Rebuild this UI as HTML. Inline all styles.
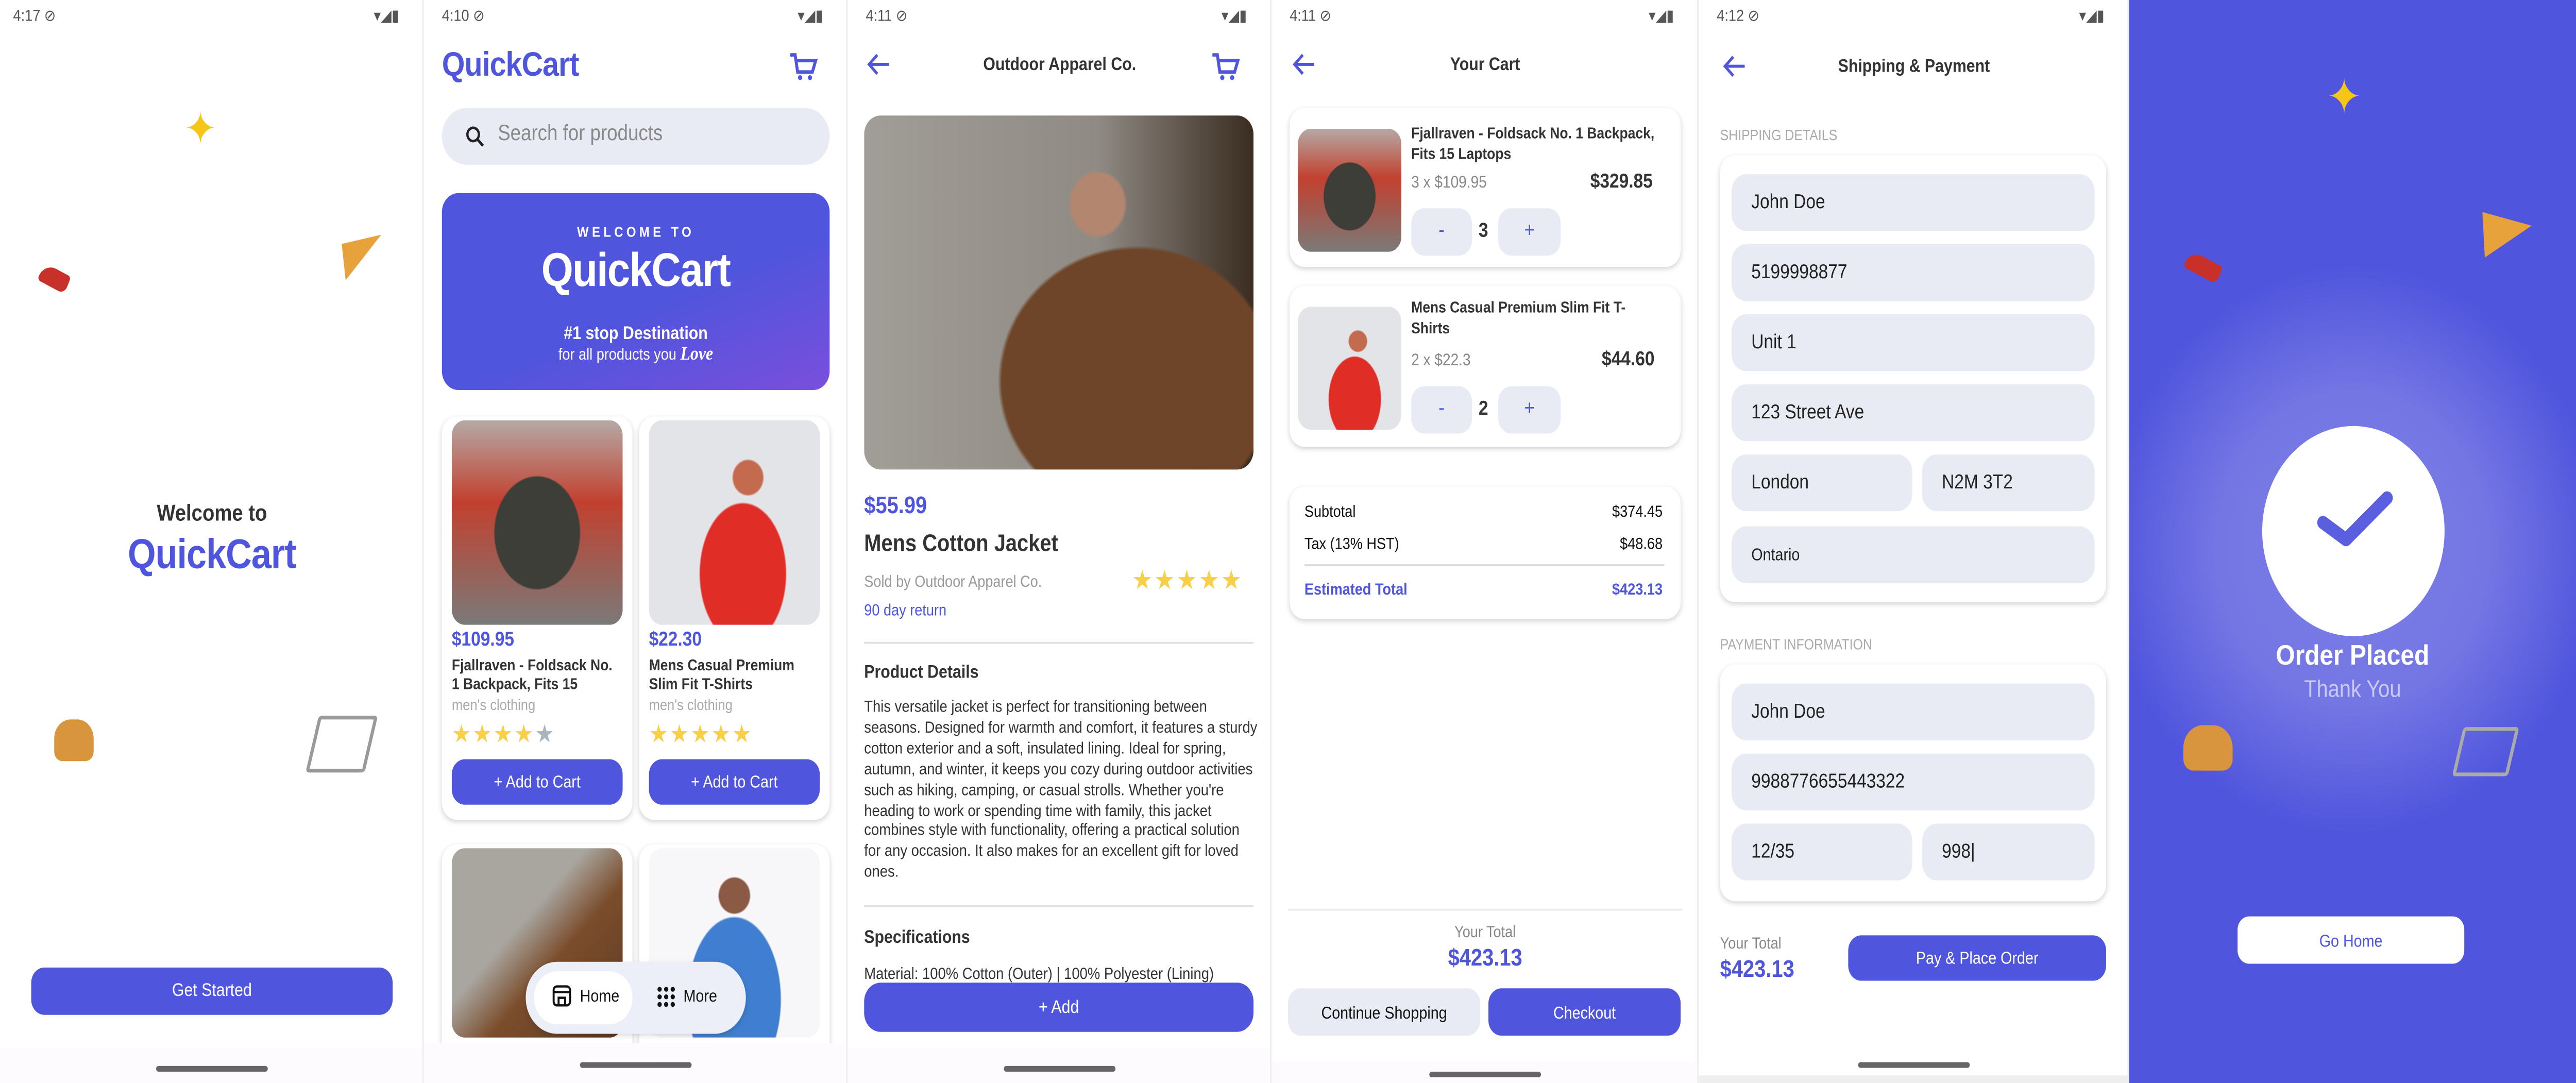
<!DOCTYPE html>
<html><head><meta charset="utf-8">
<style>
*{margin:0;padding:0;box-sizing:border-box}
html,body{width:100%;height:100%;overflow:hidden;background:#fff}
svg.root{display:block;width:100vw;height:100vh}
#w{position:relative;width:1568px;height:572px;font-family:"Liberation Sans",sans-serif;color:#333;background:#fff}
.a{position:absolute}
.scr{position:absolute;top:0;height:572px;overflow:hidden;background:#fff;border-right:1px solid #eee}
.st{position:absolute;top:3px;font-size:8.5px;color:#555}
.bar{position:absolute;left:0;right:0;height:18px;background:#fdfbfe}
.ind{position:absolute;height:2.5px;width:68px;background:#666;border-radius:2px}
.btn{position:absolute;background:#4f55dd;color:#fff;border-radius:8px;display:flex;align-items:center;justify-content:center;font-size:9.5px}
.b{font-weight:bold}
.card{position:absolute;background:#fff;border-radius:9px;box-shadow:0 1px 3px rgba(0,0,0,.18)}
.fld{position:absolute;background:#e9ebf4;border-radius:9px;font-size:10.5px;color:#222;padding-left:12px;display:flex;align-items:center}
.star{color:#f7d046;font-size:13px;letter-spacing:1px}
.c{text-align:center}
.img{position:absolute;border-radius:8px;overflow:hidden}
</style></head><body>
<svg class="root" viewBox="0 0 1568 572" preserveAspectRatio="none" xmlns="http://www.w3.org/2000/svg"><foreignObject x="0" y="0" width="1568" height="572"><div xmlns="http://www.w3.org/1999/xhtml" id="w">

<!-- Screen 1 -->
<div class="scr" style="left:0;width:258px">
<div class="st" style="left:8px">4:17 ⊘</div><div class="st" style="right:14px">▾◢▮</div>
<div class="a" style="left:112px;top:54px;font-size:24px;color:#f5c518">✦</div>
<div class="a" style="left:24px;top:142px;width:18px;height:10px;background:#c8302a;border-radius:8px 2px 4px 2px;transform:rotate(25deg)"></div>
<div class="a" style="left:208px;top:124px;width:24px;height:24px;background:#e8a23c;clip-path:polygon(0 20%,100% 0,10% 100%)"></div>
<div class="a" style="left:33px;top:380px;width:24px;height:22px;background:#d9953e;border-radius:10px 10px 5px 5px"></div>
<div class="a" style="left:190px;top:378px;width:36px;height:30px;border:2px solid #999;border-radius:2px;transform:skewX(-15deg)"></div>
<div class="a c b" style="left:0;width:258px;top:264px;font-size:12px;color:#333">Welcome to</div>
<div class="a c b" style="left:0;width:258px;top:280px;font-size:22px;color:#4f55dd;letter-spacing:-.3px">QuickCart</div>
<div class="btn" style="left:19px;top:511px;width:220px;height:25px">Get Started</div>
<div class="bar" style="top:554px"></div><div class="ind" style="left:95px;top:563px"></div>
</div>

<!-- Screen 2 -->
<div class="scr" style="left:258px;width:258px">
<div class="st" style="left:11px">4:10 ⊘</div><div class="st" style="right:14px">▾◢▮</div>
<div class="a b" style="left:11px;top:24px;font-size:18px;color:#4f55dd;letter-spacing:-.3px">QuickCart</div>
<svg class="a" style="left:222px;top:27px" width="18" height="16" viewBox="0 0 18 16"><path d="M1 2h3l1.5 9h9l2-6H5" fill="none" stroke="#4f55dd" stroke-width="1.8"/><circle cx="7" cy="14" r="1.3" fill="#4f55dd"/><circle cx="13" cy="14" r="1.3" fill="#4f55dd"/></svg>
<div class="a" style="left:11px;top:57px;width:236px;height:30px;background:#e9ebf4;border-radius:15px"></div>
<svg class="a" style="left:25px;top:66px" width="12" height="12" viewBox="0 0 12 12"><circle cx="5" cy="5" r="3.5" fill="none" stroke="#222" stroke-width="1.4"/><path d="M7.5 7.5l3.5 3.5" stroke="#222" stroke-width="1.5"/></svg>
<div class="a" style="left:45px;top:65px;font-size:11.5px;color:#888">Search for products</div>
<div class="a" style="left:11px;top:102px;width:236px;height:104px;border-radius:10px;background:linear-gradient(160deg,#4f55dd 55%,#7a4fdc 100%)">
<div class="a c b" style="left:0;width:236px;top:16px;font-size:7.5px;color:#fff;letter-spacing:2px">WELCOME TO</div>
<div class="a c b" style="left:0;width:236px;top:27px;font-size:25px;color:#fff;letter-spacing:-.5px">QuickCart</div>
<div class="a c b" style="left:0;width:236px;top:69px;font-size:9.5px;color:#fff">#1 stop Destination</div>
<div class="a c" style="left:0;width:236px;top:80px;font-size:8.5px;color:#fff">for all products you <i style="font-family:'Liberation Serif';font-weight:bold;font-size:10px">Love</i></div>
</div>
<div class="card" style="left:11px;top:220px;width:116px;height:213px"></div>
<div class="card" style="left:131px;top:220px;width:116px;height:213px"></div>
<div class="img" style="left:17px;top:222px;width:104px;height:108px;background:radial-gradient(ellipse at 50% 55%,#3e3e38 0 35%,transparent 36%),linear-gradient(180deg,#b5a9a5,#c2402f 40%,#7a7a78)"></div>
<div class="img" style="left:137px;top:222px;width:104px;height:108px;background:radial-gradient(ellipse at 55% 75%,#e02d26 0 32%,transparent 33%),radial-gradient(circle at 58% 28%,#c46a4e 0 9%,transparent 10%),#e3e4e8"></div>
<div class="a b" style="left:17px;top:332px;font-size:10.5px;color:#4f55dd">$109.95</div>
<div class="a b" style="left:137px;top:332px;font-size:10.5px;color:#4f55dd">$22.30</div>
<div class="a b" style="left:17px;top:346px;font-size:8.3px;line-height:10px;width:104px;color:#333">Fjallraven - Foldsack No. 1 Backpack, Fits 15</div>
<div class="a b" style="left:137px;top:346px;font-size:8.3px;line-height:10px;width:104px;color:#333">Mens Casual Premium Slim Fit T-Shirts</div>
<div class="a" style="left:17px;top:368px;font-size:8px;color:#aaa">men's clothing</div>
<div class="a" style="left:137px;top:368px;font-size:8px;color:#aaa">men's clothing</div>
<div class="a star" style="left:17px;top:380px">★★★★<span style="color:#aab4bc">★</span></div>
<div class="a star" style="left:137px;top:380px">★★★★★</div>
<div class="btn" style="left:17px;top:401px;width:104px;height:24px;border-radius:8px;font-size:9px">+ Add to Cart</div>
<div class="btn" style="left:137px;top:401px;width:104px;height:24px;border-radius:8px;font-size:9px">+ Add to Cart</div>
<div class="card" style="left:11px;top:446px;width:116px;height:120px"></div>
<div class="card" style="left:131px;top:446px;width:116px;height:120px"></div>
<div class="img" style="left:17px;top:448px;width:104px;height:100px;background:linear-gradient(135deg,#a9a6a0 0 40%,#7b4d2c 60%,#5a3a22)"></div>
<div class="img" style="left:137px;top:448px;width:104px;height:100px;background:radial-gradient(ellipse at 50% 80%,#3f7ed0 0 38%,transparent 39%),radial-gradient(circle at 50% 25%,#8a5a44 0 10%,transparent 11%),#f7f7f9"></div>
<div class="a" style="left:62px;top:508px;width:134px;height:38px;background:#edeff8;border-radius:19px;box-shadow:0 1px 3px rgba(0,0,0,.15)"></div>
<div class="a" style="left:67px;top:513px;width:60px;height:28px;background:#fff;border-radius:14px"></div>
<svg class="a" style="left:78px;top:520px" width="12" height="12" viewBox="0 0 12 12"><rect x="1" y="1" width="10" height="10" rx="2" fill="none" stroke="#111" stroke-width="1.2"/><path d="M1 4h10M4 11V7h4v4" fill="none" stroke="#111" stroke-width="1.2"/></svg>
<div class="a" style="left:95px;top:521px;font-size:9px;color:#111">Home</div>
<svg class="a" style="left:142px;top:521px" width="11" height="11" viewBox="0 0 11 11" fill="#111"><circle cx="1.5" cy="1.5" r="1.3"/><circle cx="5.5" cy="1.5" r="1.3"/><circle cx="9.5" cy="1.5" r="1.3"/><circle cx="1.5" cy="5.5" r="1.3"/><circle cx="5.5" cy="5.5" r="1.3"/><circle cx="9.5" cy="5.5" r="1.3"/><circle cx="1.5" cy="9.5" r="1.3"/><circle cx="5.5" cy="9.5" r="1.3"/><circle cx="9.5" cy="9.5" r="1.3"/></svg>
<div class="a" style="left:158px;top:521px;font-size:9px;color:#111">More</div>
<div class="bar" style="top:551px;height:21px"></div><div class="ind" style="left:95px;top:561px"></div>
</div>

<!-- Screen 3 -->
<div class="scr" style="left:516px;width:258px">
<div class="st" style="left:11px">4:11 ⊘</div><div class="st" style="right:14px">▾◢▮</div>
<svg class="a" style="left:11px;top:28px" width="15" height="12" viewBox="0 0 15 12"><path d="M14 6H2M7 1L2 6l5 5" fill="none" stroke="#4f55dd" stroke-width="1.6"/></svg>
<div class="a c b" style="left:0;width:258px;top:29px;font-size:9.5px;color:#333">Outdoor Apparel Co.</div>
<svg class="a" style="left:221px;top:27px" width="18" height="16" viewBox="0 0 18 16"><path d="M1 2h3l1.5 9h9l2-6H5" fill="none" stroke="#4f55dd" stroke-width="1.8"/><circle cx="7" cy="14" r="1.3" fill="#4f55dd"/><circle cx="13" cy="14" r="1.3" fill="#4f55dd"/></svg>
<div class="img" style="left:10px;top:61px;width:237px;height:187px;border-radius:10px;background:radial-gradient(ellipse at 70% 75%,#6e4528 0 35%,transparent 36%),radial-gradient(circle at 60% 25%,#b38670 0 8%,transparent 9%),linear-gradient(90deg,#a19d97 0%,#8f8a84 60%,#3a2c20 100%)"></div>
<div class="a b" style="left:10px;top:260px;font-size:12.5px;color:#4f55dd">$55.99</div>
<div class="a b" style="left:10px;top:280px;font-size:12.5px;color:#333">Mens Cotton Jacket</div>
<div class="a" style="left:10px;top:302px;font-size:8.5px;color:#999">Sold by Outdoor Apparel Co.</div>
<div class="a star" style="left:173px;top:298px;font-size:14px">★★★★★</div>
<div class="a" style="left:10px;top:317px;font-size:8.5px;color:#4f55dd">90 day return</div>
<div class="a" style="left:10px;top:339px;width:237px;height:1px;background:#e0e0e0"></div>
<div class="a b" style="left:10px;top:350px;font-size:9.5px;color:#333">Product Details</div>
<div class="a" style="left:10px;top:368px;width:240px;font-size:8.6px;line-height:10.9px;color:#333">This versatile jacket is perfect for transitioning between seasons. Designed for warmth and comfort, it features a sturdy cotton exterior and a soft, insulated lining. Ideal for spring, autumn, and winter, it keeps you cozy during outdoor activities such as hiking, camping, or casual strolls. Whether you're heading to work or spending time with family, this jacket combines style with functionality, offering a practical solution for any occasion. It also makes for an excellent gift for loved ones.</div>
<div class="a" style="left:10px;top:478px;width:237px;height:1px;background:#e0e0e0"></div>
<div class="a b" style="left:10px;top:490px;font-size:9.5px;color:#333">Specifications</div>
<div class="a" style="left:10px;top:509px;font-size:8.6px;color:#333;white-space:nowrap">Material: 100% Cotton (Outer) | 100% Polyester (Lining)</div>
<div class="btn" style="left:10px;top:519px;width:237px;height:26px;border-radius:10px">+ Add</div>
<div class="bar" style="top:554px"></div><div class="ind" style="left:95px;top:563px"></div>
</div>

<!-- Screen 4 -->
<div class="scr" style="left:774px;width:260px">
<div class="st" style="left:11px">4:11 ⊘</div><div class="st" style="right:14px">▾◢▮</div>
<svg class="a" style="left:12px;top:28px" width="15" height="12" viewBox="0 0 15 12"><path d="M14 6H2M7 1L2 6l5 5" fill="none" stroke="#4f55dd" stroke-width="1.6"/></svg>
<div class="a c b" style="left:0;width:260px;top:29px;font-size:9.5px;color:#333">Your Cart</div>
<div class="card" style="left:11px;top:57px;width:238px;height:84px"></div>
<div class="img" style="left:16px;top:68px;width:63px;height:65px;background:radial-gradient(ellipse at 50% 55%,#3e3e38 0 35%,transparent 36%),linear-gradient(180deg,#b5a9a5,#c2402f 40%,#7a7a78)"></div>
<div class="a b" style="left:85px;top:65px;width:150px;font-size:8.3px;line-height:10.5px;color:#333">Fjallraven - Foldsack No. 1 Backpack, Fits 15 Laptops</div>
<div class="a" style="left:85px;top:91px;font-size:8.8px;color:#888">3 x $109.95</div>
<div class="a b" style="left:194px;top:90px;font-size:10.5px;color:#333">$329.85</div>
<div class="a c" style="left:85px;top:110px;width:37px;height:25px;background:#e9ebf4;border-radius:8px;color:#4f55dd;font-size:11px;line-height:24px">-</div>
<div class="a b" style="left:126px;top:116px;font-size:10.5px;color:#333">3</div>
<div class="a c" style="left:138px;top:110px;width:38px;height:25px;background:#e9ebf4;border-radius:8px;color:#4f55dd;font-size:11px;line-height:24px">+</div>
<div class="card" style="left:11px;top:151px;width:238px;height:85px"></div>
<div class="img" style="left:16px;top:162px;width:63px;height:65px;background:radial-gradient(ellipse at 55% 75%,#e02d26 0 32%,transparent 33%),radial-gradient(circle at 58% 28%,#c46a4e 0 9%,transparent 10%),#e3e4e8"></div>
<div class="a b" style="left:85px;top:157px;width:150px;font-size:8.3px;line-height:10.5px;color:#333">Mens Casual Premium Slim Fit T-Shirts</div>
<div class="a" style="left:85px;top:185px;font-size:8.8px;color:#888">2 x $22.3</div>
<div class="a b" style="left:201px;top:184px;font-size:10.5px;color:#333">$44.60</div>
<div class="a c" style="left:85px;top:204px;width:37px;height:25px;background:#e9ebf4;border-radius:8px;color:#4f55dd;font-size:11px;line-height:24px">-</div>
<div class="a b" style="left:126px;top:210px;font-size:10.5px;color:#333">2</div>
<div class="a c" style="left:138px;top:204px;width:38px;height:25px;background:#e9ebf4;border-radius:8px;color:#4f55dd;font-size:11px;line-height:24px">+</div>
<div class="card" style="left:11px;top:257px;width:238px;height:70px"></div>
<div class="a" style="left:20px;top:265px;font-size:8.5px;color:#111">Subtotal</div><div class="a" style="right:21px;top:265px;font-size:8.5px;color:#111">$374.45</div>
<div class="a" style="left:20px;top:282px;font-size:8.5px;color:#111">Tax (13% HST)</div><div class="a" style="right:21px;top:282px;font-size:8.5px;color:#111">$48.68</div>
<div class="a" style="left:20px;top:298px;width:219px;height:1px;background:#ddd"></div>
<div class="a b" style="left:20px;top:306px;font-size:8.5px;color:#4f55dd">Estimated Total</div><div class="a b" style="right:21px;top:306px;font-size:8.5px;color:#4f55dd">$423.13</div>
<div class="a" style="left:10px;top:480px;width:240px;height:1px;background:#eee"></div>
<div class="a c" style="left:0;width:260px;top:487px;font-size:8.5px;color:#888">Your Total</div>
<div class="a c b" style="left:0;width:260px;top:499px;font-size:12.5px;color:#4f55dd">$423.13</div>
<div class="btn" style="left:10px;top:522px;width:117px;height:25px;background:#e9ebf4;color:#111;font-size:9px">Continue Shopping</div>
<div class="btn" style="left:132px;top:522px;width:117px;height:25px;font-size:9px">Checkout</div>
<div class="bar" style="top:561px;height:11px"></div><div class="ind" style="left:96px;top:566px"></div>
</div>

<!-- Screen 5 -->
<div class="scr" style="left:1034px;width:262px">
<div class="st" style="left:11px">4:12 ⊘</div><div class="st" style="right:14px">▾◢▮</div>
<svg class="a" style="left:14px;top:29px" width="15" height="12" viewBox="0 0 15 12"><path d="M14 6H2M7 1L2 6l5 5" fill="none" stroke="#4f55dd" stroke-width="1.6"/></svg>
<div class="a c b" style="left:0;width:262px;top:30px;font-size:9.5px;color:#333">Shipping &amp; Payment</div>
<div class="a" style="left:13px;top:67px;font-size:7.8px;color:#aaa">SHIPPING DETAILS</div>
<div class="card" style="left:13px;top:82px;width:235px;height:236px"></div>
<div class="fld" style="left:20px;top:92px;width:221px;height:30px">John Doe</div>
<div class="fld" style="left:20px;top:129px;width:221px;height:30px">5199998877</div>
<div class="fld" style="left:20px;top:166px;width:221px;height:30px">Unit 1</div>
<div class="fld" style="left:20px;top:203px;width:221px;height:30px">123 Street Ave</div>
<div class="fld" style="left:20px;top:240px;width:110px;height:30px">London</div>
<div class="fld" style="left:136px;top:240px;width:105px;height:30px">N2M 3T2</div>
<div class="fld" style="left:20px;top:278px;width:221px;height:30px;font-size:9px">Ontario</div>
<div class="a" style="left:13px;top:336px;font-size:7.8px;color:#aaa">PAYMENT INFORMATION</div>
<div class="card" style="left:13px;top:351px;width:235px;height:125px"></div>
<div class="fld" style="left:20px;top:361px;width:221px;height:30px">John Doe</div>
<div class="fld" style="left:20px;top:398px;width:221px;height:30px">9988776655443322</div>
<div class="fld" style="left:20px;top:435px;width:110px;height:30px">12/35</div>
<div class="fld" style="left:136px;top:435px;width:105px;height:30px">998|</div>
<div class="a" style="left:13px;top:493px;font-size:8.5px;color:#888">Your Total</div>
<div class="a b" style="left:13px;top:505px;font-size:12.5px;color:#4f55dd">$423.13</div>
<div class="btn" style="left:91px;top:494px;width:157px;height:24px;font-size:9px">Pay &amp; Place Order</div>
<div class="bar" style="top:556px;height:12px;background:#fff"></div><div class="ind" style="left:97px;top:561px"></div>
<div class="a" style="left:0;top:568px;width:262px;height:4px;background:#eee"></div>
</div>

<!-- Screen 6 -->
<div class="scr" style="left:1296px;width:272px;border:none;background:radial-gradient(ellipse 150px 150px at 136px 290px,#7b7de6 0%,#7476e4 55%,#4f55dd 100%)">
<div class="a" style="left:120px;top:36px;font-size:26px;color:#f5c518">✦</div>
<div class="a" style="left:34px;top:136px;width:22px;height:10px;background:#c8302a;border-radius:8px 2px 4px 2px;transform:rotate(25deg)"></div>
<div class="a" style="left:215px;top:112px;width:30px;height:24px;background:#e8a23c;clip-path:polygon(0 0,100% 30%,5% 100%)"></div>
<div class="a" style="left:33px;top:383px;width:30px;height:24px;background:#d9953e;border-radius:12px 12px 6px 6px"></div>
<div class="a" style="left:200px;top:384px;width:34px;height:26px;border:2px solid #aaa;border-radius:2px;transform:skewX(-15deg)"></div>
<div class="a" style="left:81px;top:225px;width:111px;height:111px;border-radius:50%;background:#fff"></div>
<svg class="a" style="left:113px;top:258px" width="48" height="34" viewBox="0 0 48 34"><path d="M5 18l14 9 25-22" fill="none" stroke="#5a5fe0" stroke-width="7" stroke-linecap="round" stroke-linejoin="round"/></svg>
<div class="a c b" style="left:0;width:272px;top:338px;font-size:15px;color:#fff">Order Placed</div>
<div class="a c" style="left:0;width:272px;top:357px;font-size:12.5px;color:#c8caf5">Thank You</div>
<div class="btn" style="left:66px;top:484px;width:138px;height:25px;background:#fff;color:#4f55dd;border-radius:7px;font-size:9px">Go Home</div>
</div>

</div></foreignObject></svg>
</body></html>
